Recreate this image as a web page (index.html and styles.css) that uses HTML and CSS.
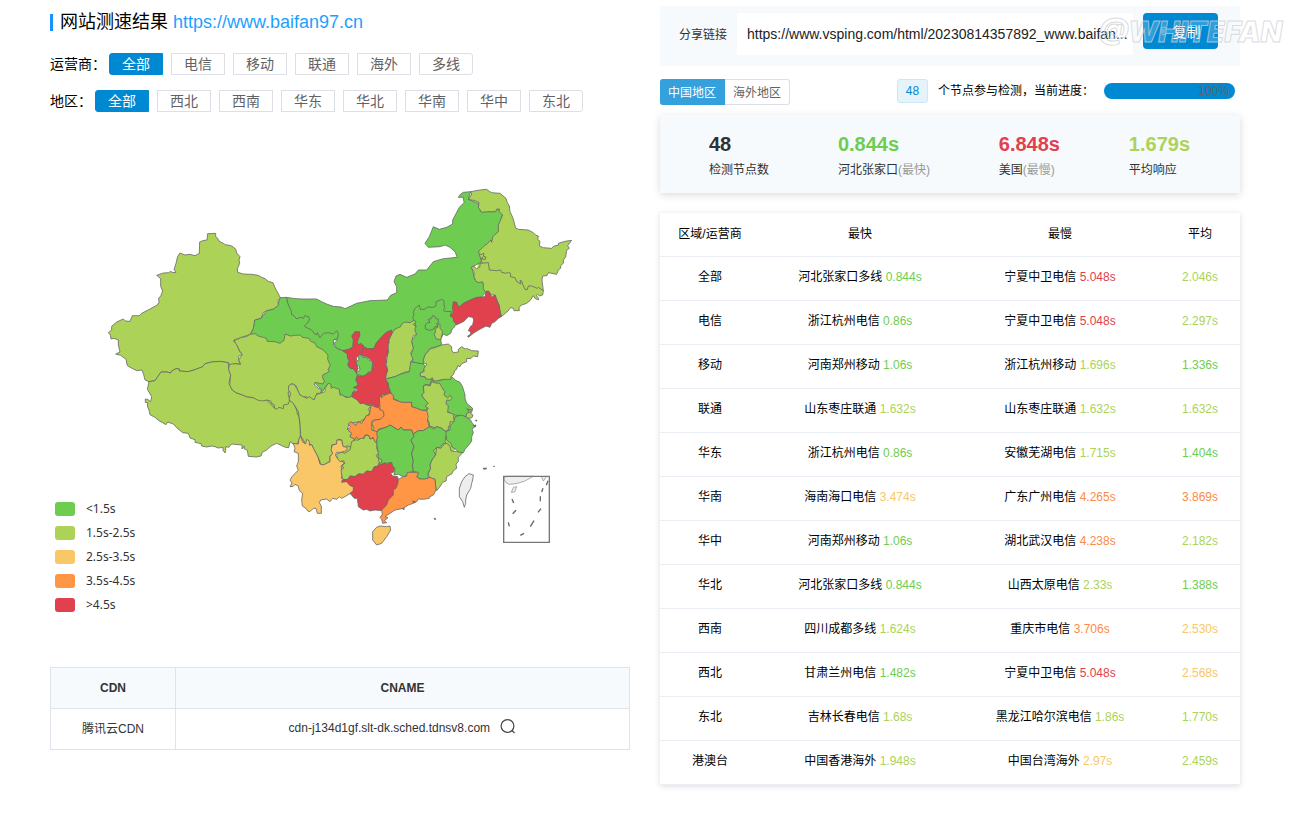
FILE: index.html
```html
<!DOCTYPE html>
<html lang="zh-CN">
<head>
<meta charset="utf-8">
<title>网站测速结果</title>
<link rel="stylesheet" href="styles.css">
</head>
<body>
<main class="page">
<section class="left">
  <h1 class="title">网站测速结果 <a href="#">https://www.baifan97.cn</a></h1>
  <div class="filter" role="group" aria-label="运营商">
    <span class="filter-label">运营商：</span>
    <button class="pill on">全部</button><button class="pill">电信</button><button class="pill">移动</button><button class="pill">联通</button><button class="pill">海外</button><button class="pill">多线</button>
  </div>
  <div class="filter" role="group" aria-label="地区">
    <span class="filter-label">地区：</span>
    <button class="pill on">全部</button><button class="pill">西北</button><button class="pill">西南</button><button class="pill">华东</button><button class="pill">华北</button><button class="pill">华南</button><button class="pill">华中</button><button class="pill">东北</button>
  </div>
  <div class="map">
    <svg class="map-svg" viewBox="-150 -180 1740 1500" role="img" aria-label="中国地图">
      <path class="c2" d="M1135 222H1200V295H1130ZM480 465L570 620 710 680 755 780 660 860 590 800 440 650ZM860 600H1050L1090 690 1065 810 990 880H710L740 760Z"/>
      <g class="area" transform="translate(510 300)">
        <path class="c1" d="M49 52L75 56 100 57 140 57 155 65 172 73 190 79 213 81 225 86 243 78 260 70 300 62 352 60 362 46 380 38 380 20 372 5 378-12 390-17 410-8 435-18 445-30 470-30 490-55 520-64 562-68 555-85 540-98 525-105 510-100 475-98 465-110 478-130 490-160 508-152 530-158 548-168 548-180 568-218 582-232 580-248 565-248 572-258 580-263 602-265 595-242 625-230 632-205 670-205 688-213 698-200 685-145 665-115 625-85 635-55 605-38 615 0 640 10 650 35 610 75 560 100 548 110 500 130 440 150 370 180 330 220 250 225 200 205 192 190 203 180 100 170 60 110Z"/>
        <path class="c1" d="M31 53L49 52 55 75 63 90 65 104 73 108 80 117 90 112 100 115 104 107 117 111 118 120 112 130 103 138 108 142 125 150 133 161 139 165 142 158 150 173 160 160 175 158 190 162 200 152 205 160 203 175 190 180 191 196 200 205 218 212 232 220 236 250 243 262 260 275 262 285 258 300 265 315 262 325 250 335 240 355 228 350 210 345 208 330 190 325 175 310 165 322 160 332 150 340 150 325 135 310 100 250-60 165-50 145-46 120-26 114-10 92 10 87 23 76Z"/>
      </g>
      <g class="area" transform="translate(0 120)">
        <path class="c2" d="M323 41L347 40 347 49 352 54 358 64 370 70 376 74 393 77 404 84 408 90 410 99 420 110 417 120 419 130 412 146 413 157 430 162 455 163 475 166 485 172 495 176 505 184 519 188 524 201 530 212 541 233 534 242 535 256 520 267 500 272 490 278 484 294 464 300 460 325 451 343 425 352 402 360 402 366 413 368 412 378 419 393 427 403 416 409 416 420 422 433 405 431 388 436 385 428 360 424 335 426 315 431 308 440 298 444 285 449 265 455 238 453 238 447 228 446 215 453 212 459 200 456 183 456 172 472 165 482 147 485 135 480 131 464 126 450 110 452 100 447 82 437 78 418 62 406 47 402 60 396 55 375 55 360 42 355 33 357 31 345 25 338 35 330 35 319 50 306 70 297 76 303 90 304 97 287 118 287 125 280 148 268 172 255 177 247 176 234 182 229 188 213 182 199 182 176 170 166 190 159 206 158 212 154 219 158 228 157 222 149 228 130 233 109 240 99 255 105 270 103 285 107 298 100 299 66 308 62 321 60Z"/>
        <path class="c2" d="M147 485L165 482 172 472 183 456 200 456 212 459 215 453 228 446 238 447 238 453 265 455 285 449 298 444 308 440 315 431 335 426 360 424 385 428 386 445 392 465 387 490 397 510 408 518 440 530 500 540 524 565 551 555 567 540 580 548 590 570 592 582 597 590 601 620 601 648 594 668 585 676 570 665 566 683 556 682 530 670 513 678 500 690 487 697 483 708 470 711 445 709 442 691 432 686 433 678 426 687 426 675 395 672 386 682 377 680 377 692 375 699 369 691 369 682 355 684 345 680 335 678 320 681 305 678 303 671 285 667 285 659 270 654 265 640 248 638 230 623 220 612 203 606 198 614 177 602 165 592 150 584 147 570 142 558 143 548 136 547 136 537 143 538 152 545 155 530 142 508Z"/>
        <path class="c2" d="M402 362L412 358 425 352 438 350 451 343 465 341 477 349 490 352 500 356 502 364 525 365 540 370 552 361 555 342 572 348 586 346 600 345 607 352 627 355 632 364 645 369 650 380 670 390 684 405 683 418 691 435 684 449 688 455 668 465 668 475 674 483 668 492 645 487 643 495 655 505 665 508 662 520 650 520 650 531 640 540 625 538 620 530 605 532 595 517 589 498 575 491 566 498 570 510 564 519 569 540 565 552 551 555 550 566 537 562 530 568 524 565 522 553 515 551 512 543 500 540 487 543 472 540 460 533 440 530 428 525 408 518 397 510 389 495 392 465 386 450 388 433 405 431 422 433 416 420 427 403 419 393 412 378Z"/>
      </g>
      <g class="area" transform="translate(900 0)">
        <path class="c2" d="M212 35L240 30 260 28 268 34 275 38 300 40 318 55 322 68 328 78 330 95 338 112 342 126 347 144 355 148 385 150 400 158 408 166 415 168 413 178 420 184 418 198 430 203 455 205 462 198 475 196 475 190 495 184 515 181 503 197 508 205 500 211 497 231 490 240 490 250 482 257 482 265 475 270 470 283 445 278 441 287 428 288 426 300 430 332 395 340 340 305 262 275 245 245 243 235 248 232 248 238 256 238 258 231 250 229 252 220 242 224 235 215 250 200 262 191 273 180 275 187 278 170 295 155 295 135 308 105 298 95 298 87 290 87 287 95 262 95 245 97 235 82 237 67 225 62 205 58 212 48 215 42Z"/>
        <path class="c2" d="M213 262L222 258 229 267 240 260 240 250 265 248 268 270 290 272 302 270 305 277 318 280 325 277 332 280 331 290 345 293 350 305 362 312 360 301 365 303 370 318 376 329 382 328 385 318 395 318 412 325 415 322 430 332 428 345 418 348 413 343 408 347 415 353 415 360 405 355 400 347 390 362 380 370 365 375 357 382 358 392 342 392 340 385 332 383 324 393 304 410 297 375 285 345 272 345 265 333 255 335 250 325 250 310 245 303 240 308 228 305 222 290 222 275Z"/>
        <path class="c5" d="M160 365L170 367 175 378 171 384 182 377 190 370 210 360 230 352 255 350 258 337 265 333 270 339 275 352 285 345 290 360 297 375 300 395 304 410 295 415 285 425 275 430 270 442 258 438 245 445 234 451 220 460 205 472 203 468 212 463 212 455 205 452 212 439 218 435 221 420 218 412 205 410 198 418 190 425 168 435 163 425 148 410 160 397 157 385Z"/>
      </g>
      <g class="area" transform="translate(510 300)">
        <path class="c1" d="M433 123L428 112 432 105 430 97 435 85 448 75 451 88 465 88 472 81 490 82 498 78 498 65 515 58 522 62 522 75 525 85 520 90 524 94 545 95 540 107 550 115 550 125 558 130 553 142 547 146 542 160 530 167 520 162 512 178 515 195 497 201 480 205 465 225 460 240 462 252 450 253 422 245 430 240 421 230 430 205 425 185 420 182 430 175 440 163 434 158 430 150 438 140Z"/>
        <path class="c1" d="M488 106L495 110 497 116 505 117 505 127 500 130 504 140 495 140 490 148 479 151 466 147 466 135 472 128 480 128 475 118 484 116Z"/>
        <path class="c2" d="M505 130L510 133 510 145 518 155 512 180 497 175 492 160 497 157 495 145 503 143Z"/>
        <path class="c2" d="M366 160L375 147 392 140 395 132 405 126 420 128 432 121 438 125 430 133 438 140 434 150 440 163 430 167 425 185 430 205 422 220 428 235 424 248 424 264 418 275 405 276 390 283 375 290 346 297 348 285 353 270 348 250 355 215 355 185Z"/>
        <path class="c1" d="M346 297L375 290 390 283 418 275 422 245 460 252 468 262 450 285 465 292 485 297 480 315 465 313 460 318 462 338 455 345 465 360 475 370 470 390 455 391 440 385 425 380 425 367 395 368 370 355 363 340 357 322Z"/>
        <path class="c1" d="M485 297L500 303 520 298 545 290 557 301 570 307 578 321 585 345 585 355 590 370 608 385 607 391 590 387 597 394 590 410 575 408 555 405 530 395 500 320Z"/>
        <path class="c2" d="M515 195L497 202 480 207 465 225 460 240 460 248 470 252 467 258 462 264 462 275 450 279 452 289 465 290 468 297 480 298 487 293 490 302 500 303 520 298 542 298 543 289 550 284 555 270 560 268 563 257 570 260 575 251 590 245 590 235 602 236 610 228 623 230 625 213 605 212 590 205 586 207 575 200 565 208 565 216 550 218 545 210 545 200 535 192Z"/>
        <path class="c2" d="M485 305L500 310 508 309 515 320 520 330 525 334 522 345 533 354 540 346 547 355 540 361 530 360 528 372 535 377 533 397 545 400 552 405 550 415 555 426 540 425 540 437 535 440 535 450 525 454 516 445 500 440 495 443 478 438 478 428 472 417 472 405 465 400 475 385 465 378 475 370 465 360 455 345 462 338 460 318 470 315 480 318Z"/>
        <path class="c1" d="M555 410L575 405 590 412 600 418 606 428 615 440 606 447 610 458 605 470 605 483 597 494 585 508 580 518 565 518 560 510 545 500 545 492 530 480 530 470 523 463 525 455 540 450 540 437 552 425Z"/>
        <path class="c2" d="M590 400L600 396 603 402 609 405 606 413 594 415 588 410ZM592 388L606 391 605 398Z"/>
        <path class="c5" d="M218 212L235 208 248 201 250 180 245 168 255 155 268 155 270 165 262 185 265 195 272 190 282 198 278 215 268 225 260 232 258 250 265 265 258 278 252 267 240 265 233 255 238 242 232 232 232 222Z"/>
        <path class="c5" d="M285 201L293 206 312 205 318 190 335 170 347 158 365 150 366 160 355 178 358 188 352 193 355 215 348 235 350 248 346 253 353 270 348 285 346 297 355 310 355 325 363 340 335 345 335 353 328 355 332 368 325 384 315 380 310 375 300 372 293 376 280 370 270 371 262 360 245 350 250 335 262 332 262 325 250 323 265 315 258 300 262 287 280 288 290 280 305 275 308 245 290 230 277 228 275 218Z"/>
        <path class="c1" d="M265 230L275 223 277 232 290 233 297 241 308 245 305 275 295 276 290 283 280 288 262 284 258 278 270 270 268 258 259 255 260 243 267 240Z"/>
        <path class="c2" d="M57 360L62 340 55 330 56 318 62 313 72 312 80 325 90 345 110 355 118 350 132 360 138 345 150 340 165 335 165 325 175 310 183 313 183 325 190 322 208 328 210 345 217 345 228 353 245 350 262 360 270 371 280 370 293 376 303 377 295 388 300 397 285 415 270 425 238 430 232 448 245 460 240 470 255 473 247 488 250 500 245 503 232 497 220 505 215 480 205 478 200 492 185 495 185 505 188 520 180 530 180 545 160 555 150 552 150 545 143 529 130 505 125 494 108 495 100 480 92 468 90 430 85 395 70 370Z"/>
        <path class="c4" d="M328 345L335 353 345 345 360 339 370 345 370 358 395 367 425 367 425 380 440 385 455 391 470 392 475 410 472 420 478 441 460 452 445 452 430 462 425 450 400 450 393 441 385 450 360 435 350 441 325 448 322 458 308 450 312 445 305 430 312 420 330 418 342 400 330 388Z"/>
        <path class="c4" d="M303 375L315 380 328 384 330 390 340 393 342 408 330 418 312 420 305 425 305 450 322 455 323 470 320 490 312 488 310 472 300 477 295 465 285 465 280 475 265 478 260 470 255 478 240 470 245 460 232 448 242 441 235 432 242 425 258 436 265 425 275 430 285 415 287 408 298 405Z"/>
        <path class="c3" d="M92 468L97 485 107 492 110 478 118 483 118 496 125 494 130 505 143 529 150 552 160 555 180 545 180 530 188 520 183 510 187 495 200 492 200 480 215 480 217 492 220 500 232 502 230 512 212 517 200 517 196 525 202 535 215 542 222 550 213 558 217 580 214 595 230 600 245 615 252 620 250 635 238 642 228 648 215 655 208 650 200 658 188 655 180 665 170 657 152 660 148 668 154 678 154 700 142 700 138 685 130 685 120 695 113 693 108 685 97 678 95 660 98 640 88 632 85 618 75 613 70 619 60 620 66 609 60 600 66 590 85 570 80 558 85 545 85 520 72 515 75 505 70 490 85 492 87 477Z"/>
        <path class="c2" d="M200 522L215 517 225 520 232 515 240 510 245 485 255 480 265 480 275 474 282 476 287 465 297 468 300 477 310 475 315 486 322 490 320 505 327 520 318 527 325 535 328 550 322 560 313 560 305 575 290 573 280 583 265 582 255 590 240 588 235 597 220 600 215 585 213 570 222 563 215 557 225 550 220 542 210 545 202 535Z"/>
        <path class="c1" d="M325 450L350 441 360 435 385 450 393 441 400 450 425 450 432 470 423 480 432 500 425 520 430 545 427 555 430 575 418 577 410 588 400 590 385 583 372 585 375 566 368 560 362 548 345 550 330 558 326 550 335 548 335 538 325 535 325 520 320 490 322 470 320 460Z"/>
        <path class="c1" d="M430 462L445 452 460 452 478 440 492 447 500 440 515 445 528 455 528 465 525 485 528 490 518 492 510 503 500 502 490 512 497 525 486 540 480 555 482 565 474 580 475 600 450 597 440 590 445 577 430 575 427 555 430 545 425 520 432 500 423 480 432 470Z"/>
        <path class="c2" d="M525 490L535 492 540 500 543 513 560 515 578 518 565 532 565 545 558 552 560 565 550 572 545 582 530 590 528 603 518 607 510 620 500 632 497 620 495 598 478 593 475 580 482 565 480 555 486 540 497 525 500 502 512 505Z"/>
        <path class="c5" d="M217 600L235 598 240 588 255 590 265 582 280 583 290 573 305 575 313 562 345 548 350 553 365 547 368 560 373 563 370 575 362 580 368 588 383 590 385 600 383 613 378 625 370 630 370 645 355 660 350 675 335 692 315 690 300 693 290 688 280 690 265 680 262 655 253 655 240 640 250 632 250 620 240 617 230 605 215 607Z"/>
        <path class="c4" d="M385 598L400 590 410 588 412 577 432 577 440 577 445 582 440 590 450 597 465 597 480 592 495 598 498 630 490 645 480 650 478 655 460 658 445 657 440 665 430 670 415 675 400 685 375 690 360 700 345 710 354 713 343 722 350 728 338 730 335 718 330 712 337 703 335 690 350 675 355 660 370 645 370 630 378 625 383 613Z"/>
        <path class="c3" d="M308 755L320 742 330 738 350 740 360 738 362 750 350 770 335 790 320 795 308 780Z"/>
        <path class="c0" d="M597 581L610 585 608 600 605 610 602 625 590 645 587 660 587 670 583 682 578 665 568 650 568 625 575 605 585 590Z"/>
        <path class="speck" d="M641 565l8-1v3h-8zM492 715l4 0 0 5zM610 437l8-2-2 6zM616 421l4-1v4zM428 663l8 2-4 4zM398 686l5 0-2 4z"/>
      </g>
      <g transform="translate(1050 780)">
        <path class="c0" d="M161 116L170 109H250L225 123 198 131 177 133 168 128Z"/>
        <path class="c0" d="M274 109L280 123 290 109M190 142L200 140 194 156 184 157Z"/>
        <path class="frame" d="M161 109H298V307H161Z"/>
        <path class="dash" d="M186 177l5 12M188 221l10-10M175 247l3 12M211 286l11-6M241 260l11-18M264 217l9-11M271 169v15M275 156l4-11M289 136l5-14M99 86h7M130 79h4"/>
      </g>
    </svg>
    <ul class="legend">
      <li><i class="swatch s1"></i>&lt;1.5s</li>
      <li><i class="swatch s2"></i>1.5s-2.5s</li>
      <li><i class="swatch s3"></i>2.5s-3.5s</li>
      <li><i class="swatch s4"></i>3.5s-4.5s</li>
      <li><i class="swatch s5"></i>&gt;4.5s</li>
    </ul>
  </div>
  <table class="cdn">
    <thead><tr><th class="cdn-name">CDN</th><th>CNAME</th></tr></thead>
    <tbody><tr><td>腾讯云CDN</td><td>cdn-j134d1gf.slt-dk.sched.tdnsv8.com
      <button class="search" aria-label="查询"><svg viewBox="0 0 16 16" width="16" height="16"><circle cx="7.5" cy="7" r="6.4"/><path d="M12 11.5L14.5 14"/></svg></button></td></tr></tbody>
  </table>
</section>

<section class="right">
  <div class="share">
    <label for="link">分享链接</label>
    <input id="link" type="text" readonly value="https://www.vsping.com/html/20230814357892_www.baifan...">
    <button class="copy"><svg viewBox="0 0 6 10" width="6" height="10"><path d="M1 3V7a2 2 0 0 0 4 0V3a2 2 0 0 0-4 0M3 3v4"/></svg>复制</button>
    <span class="watermark">@WHITEFAN</span>
  </div>
  <div class="status">
    <div class="tabs"><button class="tab on">中国地区</button><button class="tab">海外地区</button></div>
    <div class="progress-line">
      <span class="badge">48</span>
      <span class="progress-text">个节点参与检测，当前进度：</span>
      <div class="bar" role="progressbar" aria-valuenow="100">100%</div>
    </div>
  </div>
  <div class="stats">
    <div><strong>48</strong><p>检测节点数</p></div>
    <div><strong class="t1">0.844s</strong><p>河北张家口<span>(最快)</span></p></div>
    <div><strong class="t5">6.848s</strong><p>美国<span>(最慢)</span></p></div>
    <div><strong class="t2">1.679s</strong><p>平均响应</p></div>
  </div>
  <table class="result">
    <colgroup><col class="w-area"><col class="w-node"><col class="w-node"><col class="w-avg"></colgroup>
    <thead><tr><th>区域/运营商</th><th>最快</th><th>最慢</th><th>平均</th></tr></thead>
    <tbody>
    <tr><td>全部</td><td>河北张家口多线 <b class="t1">0.844s</b></td><td>宁夏中卫电信 <b class="t5">5.048s</b></td><td class="t2">2.046s</td></tr>
    <tr><td>电信</td><td>浙江杭州电信 <b class="t1">0.86s</b></td><td>宁夏中卫电信 <b class="t5">5.048s</b></td><td class="t2">2.297s</td></tr>
    <tr><td>移动</td><td>河南郑州移动 <b class="t1">1.06s</b></td><td>浙江杭州移动 <b class="t2">1.696s</b></td><td class="t1">1.336s</td></tr>
    <tr><td>联通</td><td>山东枣庄联通 <b class="t2">1.632s</b></td><td>山东枣庄联通 <b class="t2">1.632s</b></td><td class="t2">1.632s</td></tr>
    <tr><td>华东</td><td>浙江杭州电信 <b class="t1">0.86s</b></td><td>安徽芜湖电信 <b class="t2">1.715s</b></td><td class="t1">1.404s</td></tr>
    <tr><td>华南</td><td>海南海口电信 <b class="t3">3.474s</b></td><td>广东广州电信 <b class="t4">4.265s</b></td><td class="t4">3.869s</td></tr>
    <tr><td>华中</td><td>河南郑州移动 <b class="t1">1.06s</b></td><td>湖北武汉电信 <b class="t4">4.238s</b></td><td class="t2">2.182s</td></tr>
    <tr><td>华北</td><td>河北张家口多线 <b class="t1">0.844s</b></td><td>山西太原电信 <b class="t2">2.33s</b></td><td class="t1">1.388s</td></tr>
    <tr><td>西南</td><td>四川成都多线 <b class="t2">1.624s</b></td><td>重庆市电信 <b class="t4">3.706s</b></td><td class="t3">2.530s</td></tr>
    <tr><td>西北</td><td>甘肃兰州电信 <b class="t1">1.482s</b></td><td>宁夏中卫电信 <b class="t5">5.048s</b></td><td class="t3">2.568s</td></tr>
    <tr><td>东北</td><td>吉林长春电信 <b class="t2">1.68s</b></td><td>黑龙江哈尔滨电信 <b class="t2">1.86s</b></td><td class="t2">1.770s</td></tr>
    <tr><td>港澳台</td><td>中国香港海外 <b class="t2">1.948s</b></td><td>中国台湾海外 <b class="t3">2.97s</b></td><td class="t2">2.459s</td></tr>
    </tbody>
  </table>
</section>
</main>
</body>
</html>
```
FILE: styles.css
```css
* { box-sizing: border-box; }
body {
  margin: 0;
  background: #fff;
  color: #000;
  font: 12px/18px "Liberation Sans", "Noto Sans CJK SC", sans-serif;
}
button, input { font-family: inherit; margin: 0; }
button { cursor: pointer; }
.page {
  display: grid;
  grid-template-columns: minmax(0, 1fr) minmax(0, 1fr);
  gap: 30px;
  padding: 6px 55px 20px 50px;
  align-items: start;
}

/* Left column */
.title {
  display: flex;
  align-items: center;
  gap: 5px;
  height: 32px;
  margin: 0 0 15px;
  font-size: 18px;
  font-weight: 400;
}
.title::before {
  content: "";
  width: 3px;
  height: 17px;
  margin-right: 2px;
  background: #1890ff;
}
.title a { color: #1e9fff; text-decoration: none; }
.filter { display: flex; align-items: center; gap: 8px; height: 22px; margin-bottom: 15px; }
.filter-label { margin-right: -5px; font-size: 14px; }
.pill {
  width: 54px;
  height: 22px;
  padding: 0;
  border: 1px solid #dcdfe6;
  background: #fff;
  color: #606266;
  font-size: 14px;
  line-height: 20px;
}
.pill.on { border-color: #0089d3; background: #0089d3; color: #fff; border-radius: 3px 0 0 3px; }
.pill:last-child { border-radius: 0 3px 3px 0; }

.map { position: relative; margin-top: -7px; }
.map-svg { display: block; width: 100%; }
.area path { stroke: #666; stroke-width: 3; stroke-linejoin: round; stroke-opacity: .8; }
.c1 { fill: #6ecd50; }
.c2 { fill: #acd358; }
.c3 { fill: #f9c767; }
.c4 { fill: #ff9645; }
.c5 { fill: #e1404d; }
.c0 { fill: #eee; stroke: #888; stroke-width: 2; }
.speck { fill: #666; }
.frame { fill: none; stroke: #777; stroke-width: 4; }
.dash { fill: none; stroke: #666; stroke-width: 4; }
.legend {
  position: absolute;
  left: 5px;
  bottom: 3px;
  margin: 0;
  padding: 0;
  list-style: none;
  color: #333;
  font-family: "Noto Sans", sans-serif;
}
.legend li { display: flex; align-items: center; gap: 11px; height: 24px; }
.swatch { width: 20px; height: 14px; border-radius: 3px; }
.s1 { background: #6ecd50; }
.s2 { background: #acd358; }
.s3 { background: #f9c767; }
.s4 { background: #ff9645; }
.s5 { background: #e1404d; }

.cdn { width: 100%; margin-top: 47px; border-collapse: collapse; color: #333; }
.cdn th, .cdn td { height: 41px; padding: 0; border: 1px solid #dfe3ec; text-align: center; }
.cdn th { background: #f6fafd; }
.cdn-name { width: 125px; }
.search { width: 16px; height: 20px; margin-left: 7px; padding: 0 0 4px; border: 0; background: none; vertical-align: middle; }
.search svg { display: block; fill: none; stroke: #444; stroke-width: 1.2; }

/* Right column */
.share {
  position: relative;
  display: flex;
  align-items: flex-start;
  height: 60px;
  padding: 7px 22px 0 19px;
  background: #f6fafd;
}
.share label { margin: 13px 10px 0 0; color: #333; white-space: nowrap; }
.share input {
  flex: 1;
  min-width: 0;
  height: 42px;
  padding: 0 5px 0 10px;
  border: 0;
  background: #fff;
  color: #222;
  font-size: 14px;
  text-overflow: ellipsis;
}
.copy {
  display: flex;
  align-items: center;
  justify-content: center;
  gap: 6px;
  width: 75px;
  height: 36px;
  margin-left: 10px;
  padding: 0;
  border: 0;
  border-radius: 4px;
  background: #0089d3;
  color: #fff;
  font-size: 14px;
}
.copy svg { fill: none; stroke: #7dbfe8; }
.watermark {
  position: absolute;
  right: -42px;
  top: 9px;
  color: rgba(255, 255, 255, .2);
  font: italic 900 28px/34px Inter, sans-serif;
  -webkit-text-stroke: 1px rgba(205, 208, 212, .75);
  pointer-events: none;
}
.status { display: flex; justify-content: space-between; align-items: flex-start; margin-top: 13px; height: 26px; }
.tabs { display: flex; }
.tab {
  height: 26px;
  padding: 0 8px 2px;
  border: 1px solid #dcdfe6;
  border-left: 0;
  border-radius: 0 3px 3px 0;
  background: #fff;
  color: #606266;
  font-size: 12px;
}
.tab.on { padding-left: 8px; border-color: #34a0dc; border-radius: 3px 0 0 3px; background: #34a0dc; color: #fff; }
.progress-line { display: flex; align-items: center; gap: 10px; height: 24px; padding-right: 5px; }
.badge {
  width: 31px;
  height: 24px;
  border: 1px solid #cce7f6;
  border-radius: 3px;
  background: #e6f3fb;
  color: #0089d3;
  line-height: 22px;
  text-align: center;
}
.bar {
  width: 131px;
  height: 16px;
  padding-right: 6px;
  border-radius: 8px;
  background: #0089d3;
  color: #606266;
  line-height: 17px;
  text-align: right;
}
.stats {
  display: flex;
  justify-content: space-between;
  height: 78px;
  margin-top: 10px;
  padding: 17px 50px 0 49px;
  background: #f6fafd;
  box-shadow: 0 2px 8px rgba(0, 0, 0, .14);
}
.stats strong { display: block; color: #303133; font-size: 20px; line-height: 24px; }
.stats p { margin: 5px 0 0; color: #303133; }
.stats span { color: #999; }
.result {
  width: 100%;
  margin-top: 20px;
  border-collapse: collapse;
  table-layout: fixed;
  box-shadow: 0 1px 6px rgba(0, 0, 0, .14);
}
.result th, .result td { height: 44px; padding: 0 0 2px; border-bottom: 1px solid #ebeef5; font-weight: 400; text-align: center; }
.result th { height: 43px; padding-bottom: 1px; }
.result b { font-weight: 400; }
.w-area { width: 100px; }
.w-avg { width: 80px; }
.stats .t1, .result .t1 { color: #6ecd50; }
.stats .t2, .result .t2 { color: #acd358; }
.result .t3 { color: #f9c767; }
.result .t4 { color: #ff8a45; }
.stats .t5, .result .t5 { color: #e1404d; }
```
